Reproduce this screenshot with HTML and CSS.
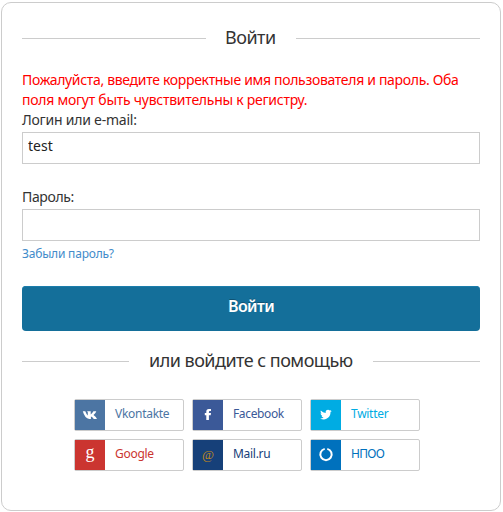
FILE: index.html
```
<!DOCTYPE html>
<html lang="ru">
<head>
<meta charset="utf-8">
<title>Войти</title>
<link rel="stylesheet" href="styles.css">
</head>
<body>
<main class="card">
  <h1 class="divider"><span class="title">Войти</span></h1>
  <form class="form">
    <p class="error">Пожалуйста, введите корректные имя пользователя и пароль. Оба<br><span class="error-tail">поля могут быть чувствительны к регистру.</span></p>
    <label class="label" for="login">Логин или e-mail:</label>
    <input class="field" id="login" type="text" value="test">
    <label class="label label-password" for="password">Пароль:</label>
    <input class="field" id="password" type="password">
    <a class="forgot" href="#">Забыли пароль?</a>
    <button class="submit" type="button">Войти</button>
  </form>
  <h2 class="divider divider-social"><span class="subtitle">или войдите с помощью</span></h2>
  <nav class="socials">
    <a class="social vk" href="#"><span class="icon"><svg width="16" height="16" viewBox="0 0 16 16"><path fill="#fff" d="M.8 4.300H3.300Q4.400 7.500 5.800 8.500V5.300L5 4.300H8.700V7.600Q10 6.800 11.400 4.300H14.300Q14 6 11.500 7.900Q14.500 10.100 15 11.900H11.800Q10.400 9.800 8.900 9.400V11.900H7.300Q2.800 11.500.8 4.300Z"/></svg></span><span class="name">Vkontakte</span></a>
    <a class="social fb" href="#"><span class="icon"><svg width="16" height="16" viewBox="0 0 16 16"><path fill="#fff" d="M6.300 13V8.200H4.800V6.100H6.300V4.500Q6.300 2 8.800 2H11V4H9.800Q8.900 4 8.900 4.900V6.100H11L10.700 8.200H8.900V13Z"/></svg></span><span class="name">Facebook</span></a>
    <a class="social tw" href="#"><span class="icon"><svg width="16" height="16" viewBox="0 0 16 16"><path fill="#fff" d="M13.700 3.900Q13.100 4.800 12.500 5.100C12.700 9.400 9.500 12.400 5.900 12.400Q3.700 12.400 2.100 11.400Q4.200 11.500 5.600 10.400Q3.900 10.200 3.400 8.700H4.400Q2.500 8.100 2.500 6.300L3.600 6.600Q1.900 5.200 2.800 3.500Q4.800 5.800 7.700 5.900C7.100 3.200 10.200 1.900 11.800 3.600L13.300 3L12.400 4.200Z"/></svg></span><span class="name">Twitter</span></a>
    <a class="social gg" href="#"><span class="icon g">g</span><span class="name">Google</span></a>
    <a class="social mail" href="#"><span class="icon at">@</span><span class="name">Mail.ru</span></a>
    <a class="social npoo" href="#"><span class="icon"><svg width="16" height="16" viewBox="0 0 16 16"><path fill="none" stroke="#fff" stroke-width="2" d="M9.300 1.900A5.700 5.700 0 1 1 6.700 1.900"/></svg></span><span class="name">НПОО</span></a>
  </nav>
</main>
</body>
</html>
```
FILE: styles.css
```
* { box-sizing: border-box; }
body {
  margin: 0;
  padding: 2px 0 0 1px;
  background: #fff;
  color: #333;
  font: 14px/20px "Noto Sans", sans-serif;
}
.card {
  width: 500px;
  height: 509px;
  padding: 24px 20px 0;
  border: 1px solid #ccc;
  border-radius: 10px;
}
.divider {
  display: flex;
  align-items: center;
  gap: 20px;
  height: 22px;
  margin: 0;
  font-size: 18px;
  font-weight: 400;
  line-height: 20px;
  white-space: nowrap;
}
.divider::before, .divider::after {
  content: "";
  flex: 1;
  height: 1px;
  background: #ccc;
}
.title, .subtitle { height: 22px; }
.title { width: 50px; letter-spacing: -.5px; text-indent: -1px; }
.subtitle { width: 204px; letter-spacing: -.52px; }
.form { display: flex; flex-direction: column; margin-top: 21px; }
.error { margin: 0; color: red; white-space: nowrap; letter-spacing: -.32px; }
.error-tail { letter-spacing: -.26px; }
.label { color: #333; letter-spacing: -.24px; }
.label-password { margin-top: 23px; letter-spacing: -.36px; }
.field {
  width: 458px;
  height: 32px;
  margin: 2px 0 0;
  padding: 0 5px 6px;
  border: 1px solid #ccc;
  outline: 0;
  background: #fff;
  color: #222;
  font: inherit;
}
.forgot {
  margin-top: 3px;
  color: #428bca;
  font-size: 12px;
  text-decoration: none;
  letter-spacing: -.2px;
}
.submit {
  height: 45px;
  margin-top: 22px;
  padding: 0 0 6px;
  border: 0;
  border-radius: 4px;
  background: #146f9a;
  box-shadow: inset 0 1px #1b7dab;
  color: #fff;
  font: 600 16px/20px "Noto Sans", sans-serif;
  letter-spacing: -.6px;
  text-shadow: 0 -1px rgba(0, 0, 0, .25);
}
.divider-social { margin-top: 19px; }
.socials {
  display: grid;
  grid-template-columns: repeat(3, 110px);
  gap: 8px;
  margin: 27px 0 0 52px;
}
.social {
  display: flex;
  height: 32px;
  border: 1px solid #ccc;
  border-radius: 2px;
  font-size: 12px;
  line-height: 28px;
  text-decoration: none;
}
.name { letter-spacing: -.28px; }
.fb .name { letter-spacing: -.36px; }
.npoo .name { letter-spacing: -.7px; }
.icon {
  display: flex;
  align-items: center;
  justify-content: center;
  width: 30px;
  height: 30px;
  margin-right: 10px;
}
.at { color: #c08a1c; font: 13px/30px "Liberation Serif", serif; }
.g.icon { color: #fff; font: 18px/22px "Liberation Serif", serif; padding-bottom: 6px; }
.vk { color: #4c75a3; }
.vk .icon { background: #4c75a3; }
.fb { color: #3b5998; }
.fb .icon { background: #3b5998; }
.tw { color: #00ace3; }
.tw .icon { background: #00ace3; }
.gg { color: #cb3530; }
.gg .icon { background: #cb3530; }
.mail { color: #164079; }
.mail .icon { background: #164079; }
.npoo { color: #0071bd; }
.npoo .icon { background: #0071bd; }
```
